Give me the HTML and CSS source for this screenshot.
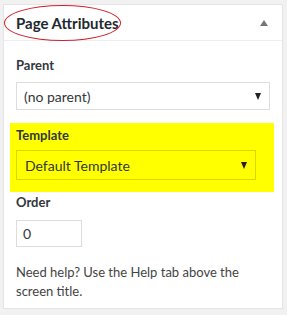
FILE: index.html
```html
<!DOCTYPE html>
<html lang="en">
  <head>
    <meta charset="UTF-8" />
    <title>Page Attributes</title>
    <link rel="stylesheet" href="styles.css">
  </head>
  <body>
    <div class="postbox">
      <div class="postbox-header">
        <h2 class="hndle">Page Attributes</h2>
        <span class="toggle-arrow"></span>
        <span class="circle-mark"></span>
      </div>

      <div class="inside">
        <p class="field-label">Parent</p>
        <div class="select-box">
          <span>(no parent)</span>
          <span class="select-arrow"></span>
        </div>

        <div class="highlight">
          <p class="field-label">Template</p>
          <div class="select-box template-select">
            <span>Default Template</span>
            <span class="select-arrow"></span>
          </div>
        </div>

        <p class="field-label order-label">Order</p>
        <div class="order-input">0</div>

        <p class="help-text">Need help? Use the Help tab above the screen title.</p>
      </div>
    </div>
  </body>
</html>
```

FILE: styles.css
```css
body {
  margin: 0;
  padding: 4px 4px 0 3px;
  background-color: #f1f1f1;
  font-family: Lato, "Open Sans", sans-serif;
  color: #444;
}

.postbox {
  background-color: #fff;
  border: 1px solid #e5e5e5;
  box-shadow: 0 1px 1px rgba(0, 0, 0, 0.04);
  height: 305px;
  box-sizing: border-box;
}

.postbox-header {
  position: relative;
  display: flex;
  align-items: center;
  justify-content: space-between;
  height: 35px;
  padding: 0 14px 0 12px;
  border-bottom: 1px solid #eee;
}

.hndle {
  margin: 0;
  font-size: 15px;
  line-height: 20px;
  font-weight: 700;
  color: #23282d;
}

.toggle-arrow {
  width: 0;
  height: 0;
  border-left: 4px solid transparent;
  border-right: 4px solid transparent;
  border-bottom: 6px solid #72777c;
}

.circle-mark {
  position: absolute;
  left: 0;
  top: 0;
  width: 117px;
  height: 36px;
  border: 1px solid #d21f2b;
  border-radius: 50%;
  box-sizing: border-box;
}

.inside {
  padding: 0 12px;
}

.field-label {
  margin: 15px 0 8px;
  font-size: 13px;
  line-height: 18px;
  font-weight: 700;
  color: #32373c;
}

.select-box {
  display: flex;
  align-items: center;
  justify-content: space-between;
  height: 28px;
  padding: 0 8px 0 7px;
  border: 1px solid #ddd;
  box-sizing: border-box;
  font-size: 14px;
  color: #32373c;
}

.select-arrow {
  width: 0;
  height: 0;
  border-left: 3px solid transparent;
  border-right: 3px solid transparent;
  border-top: 7px solid #222;
}

.highlight {
  margin: 13px -4px 0 -6px;
  padding: 3px 18px 12px 6px;
  background-color: #ffff00;
}

.highlight .field-label {
  margin: 0 0 6px;
}

.template-select {
  height: 30px;
  border-color: #d8d800;
  padding-left: 8px;
}

.order-label {
  margin: 1px 0 9px;
}

.order-input {
  width: 66px;
  height: 27px;
  padding: 0 6px;
  border: 1px solid #ddd;
  box-sizing: border-box;
  font-size: 14px;
  line-height: 25px;
  color: #32373c;
}

.help-text {
  margin: 16px 0 0;
  font-size: 13px;
  line-height: 19px;
  color: #444;
}
```
